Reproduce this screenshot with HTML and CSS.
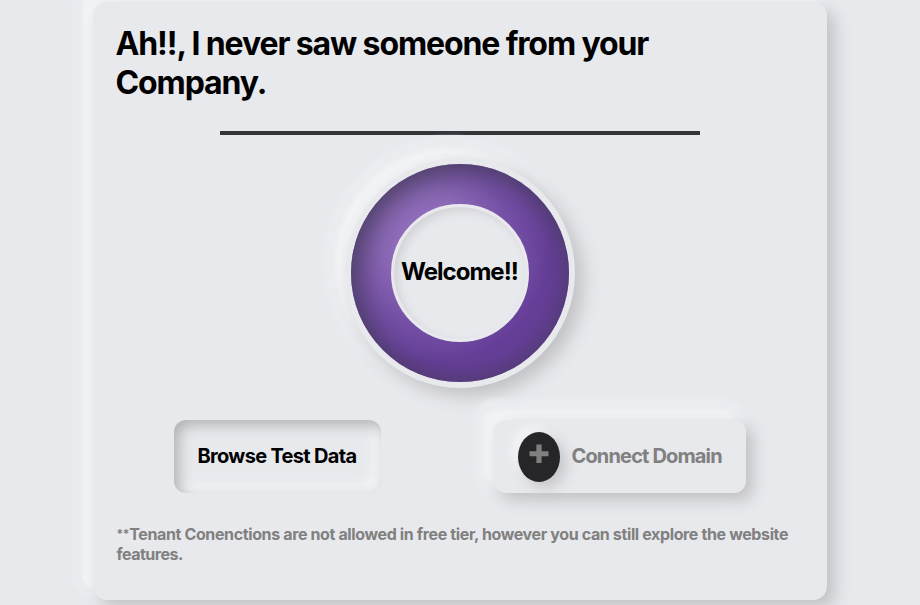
FILE: index.html
```html
<!DOCTYPE html>
<html lang="en">
<head>
<meta charset="utf-8">
<title>Welcome</title>
<link rel="stylesheet" href="styles.css">
</head>
<body>
<main class="card">
  <h1 class="title"><span class="title-first">Ah!!, I never saw someone from your</span><br><span class="title-second">Company.</span></h1>
  <hr class="rule">
  <div class="dial"><div class="ring"><div class="hub"><span>Welcome!!</span></div></div></div>
  <div class="actions">
    <button class="btn browse"><span>Browse Test Data</span></button>
    <button class="btn connect">
      <span class="plus"><svg width="20" height="20" viewBox="0 0 20 20"><path d="M10 .5v18.5M.5 9.75h19" stroke="#808080" stroke-width="5.2"/></svg></span>
      <span class="connect-label">Connect Domain</span>
    </button>
  </div>
  <p class="note"><span class="note-first"><span class="stars">**</span>Tenant Conenctions are not allowed in free tier, however you can still explore the website</span><br><span class="note-second">features.</span></p>
</main>
</body>
</html>
```
FILE: styles.css
```css
* { box-sizing: border-box; }
html { overflow: hidden; }
body {
  margin: 0;
  height: 605px;
  overflow: hidden;
  padding: 2px 93px 0;
  background: #e8e9ed;
  font-family: Inter, "Liberation Sans", sans-serif;
  font-weight: 700;
  color: #000;
}
.card {
  display: flex;
  flex-direction: column;
  align-items: center;
  width: 733.5px;
  height: 598px;
  padding: 22px 24px 0 23.5px;
  border-radius: 14px;
  background: #e8e9ed;
  box-shadow: 8px 8px 16px #c2c3c6, -10px -10px 2px #f2f3f5, -11px -11px 3px 10px #ebecf0;
}
.title {
  align-self: stretch;
  margin: 0 0 0 -1px;
  font-size: 32px;
  line-height: 39px;
  font-weight: 700;
  white-space: nowrap;
}
.title-first { letter-spacing: -1.12px; }
.title-second { letter-spacing: -1.12px; }
.rule {
  width: 480px;
  height: 4px;
  margin: 29px 0 23px;
  border: 0;
  background: #323639;
}
.dial {
  display: grid;
  place-items: center;
  flex: none;
  width: 230px;
  height: 230px;
  border-radius: 50%;
  background: #e8e9ed;
  box-shadow: 8px 8px 18px #c0c1c4, -10px -10px 4px #f2f3f5, -11px -11px 3px 11px #ebecf0;
}
.ring {
  display: grid;
  place-items: center;
  width: 218px;
  height: 218px;
  border-radius: 50%;
  background: radial-gradient(circle at 34% 34%, #9673c0 0, #8b68b6 22%, #7550a6 42%, #673f99 62%, #663f98 100%);
  box-shadow: inset 7px 7px 28px rgba(70, 62, 88, .75), inset -3px -3px 22px rgba(76, 58, 108, .65);
}
.hub {
  display: grid;
  place-items: center;
  width: 138px;
  height: 138px;
  padding-bottom: 3px;
  border: 3px solid #e9e8ef;
  border-radius: 50%;
  background: #e8e9ed;
  box-shadow: inset 4px 4px 9px #d2d3d7;
  font-size: 24px;
  line-height: 28px;
  letter-spacing: -1px;
  white-space: nowrap;
}
.actions {
  display: flex;
  gap: 113px;
  margin-top: 32px;
}
.btn {
  display: flex;
  align-items: center;
  height: 73px;
  padding: 0 24px;
  border: 0;
  border-radius: 12px;
  background: #e8e9ed;
  font: 700 20px/24px Inter, "Liberation Sans", sans-serif;
  color: #000;
  white-space: nowrap;
}
.browse {
  width: 207px;
  letter-spacing: -.68px;
  padding-bottom: 2px;
  box-shadow: inset 5px 5px 14px #b2b3b6, inset -9px -9px 10px #f3f4f6;
}
.connect {
  width: 252px;
  gap: 12px;
  color: #808080;
  letter-spacing: -.85px;
  box-shadow: 7px 7px 16px #c0c1c4, -10px -10px 4px #f2f3f5, -11px -11px 4px 10px #ebecf0;
}
.plus {
  display: flex;
  flex: none;
  justify-content: center;
  width: 42px;
  height: 50px;
  padding-top: 12px;
  border-radius: 50%;
  background: #262628;
  box-shadow: 6px 6px 14px #c4c5c8, -6px -6px 9px #f3f4f6;
}
.connect-label { padding-bottom: 2px; }
.note {
  align-self: stretch;
  margin: 30.5px 0 0;
  font-size: 16px;
  line-height: 20px;
  color: #808080;
  white-space: nowrap;
}
.note-first { letter-spacing: -.37px; }
.note-second { letter-spacing: -.5px; }
.stars { font-size: 12px; line-height: 1; vertical-align: 2px; }
```
